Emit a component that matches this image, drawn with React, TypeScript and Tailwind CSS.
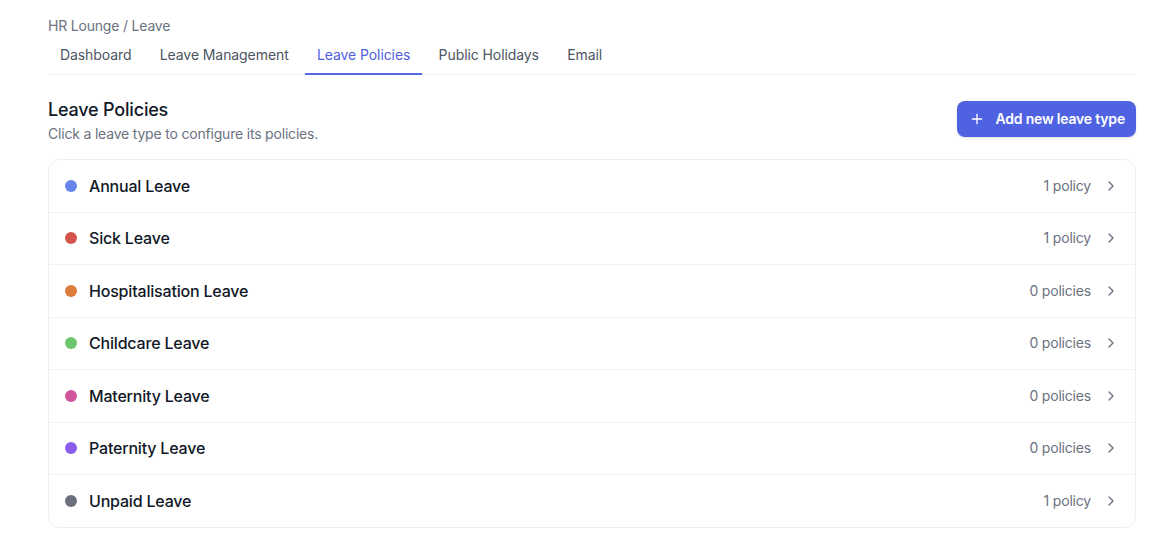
import React from "react";
import { ChevronRight, Plus } from "lucide-react";

const rows = [
  { name: "Annual Leave", color: "#6584ec", count: "1 policy" },
  { name: "Sick Leave", color: "#d2544c", count: "1 policy" },
  { name: "Hospitalisation Leave", color: "#dd7b3a", count: "0 policies" },
  { name: "Childcare Leave", color: "#6cc76e", count: "0 policies" },
  { name: "Maternity Leave", color: "#d1559b", count: "0 policies" },
  { name: "Paternity Leave", color: "#8a5cee", count: "0 policies" },
  { name: "Unpaid Leave", color: "#6b6f7b", count: "1 policy" },
];

const tabs = ["Dashboard", "Leave Management", "Leave Policies", "Public Holidays", "Email"];

export default function App() {
  return (
    <div className="min-h-screen bg-white tracking-[-0.012em]" style={{ fontFamily: "Inter, 'Noto Sans', sans-serif" }}>
      <div className="pl-[48px] pr-[33px] pt-[16px]">
        <div className="text-sm leading-5 text-[#6b7280]">HR Lounge / Leave</div>
        <div className="mt-[4px] flex gap-[4.3px] border-b border-[#eef0f4]">
          {tabs.map((t) => {
            const active = t === "Leave Policies";
            return (
              <div
                key={t}
                className={
                  active
                    ? "px-3 pt-[5px] pb-[8px] text-sm leading-5 tracking-[-0.006em] text-[#4f5fdc] border-b-2 border-[#5569e0] -mb-px"
                    : "px-3 pt-[5px] pb-[8px] text-sm leading-5 tracking-[-0.006em] text-[#4b5563] border-b-2 border-transparent -mb-px"
                }
              >
                {t}
              </div>
            );
          })}
        </div>
        <div className="mt-[21px] flex items-center justify-between">
          <div>
            <div className="text-lg leading-7 font-medium text-[#111827]">Leave Policies</div>
            <div className="text-sm leading-5 text-[#6b7280]">Click a leave type to configure its policies.</div>
          </div>
          <button className="mt-[-2px] flex h-9 items-center gap-[10px] rounded-lg bg-[#4f63e2] pl-[12px] pr-[11px] text-sm font-semibold text-white shadow-sm">
            <Plus size={16} strokeWidth={2} />
            <span>Add new leave type</span>
          </button>
        </div>
        <div className="mt-[15px] rounded-xl border border-[#eceef2] bg-white">
          {rows.map((r, i) => (
            <div
              key={r.name}
              className={
                i === 0
                  ? "flex h-[51.5px] items-center justify-between px-4"
                  : "flex h-[52.5px] items-center justify-between border-t border-[#f0f1f5] px-4"
              }
            >
              <div className="flex items-center gap-3">
                <span className="block h-3 w-3 rounded-full" style={{ backgroundColor: r.color }} />
                <span className="text-base font-medium text-[#111827]">{r.name}</span>
              </div>
              <div className="flex items-center gap-3">
                <span className="text-sm text-[#6b7280]">{r.count}</span>
                <ChevronRight size={16} className="text-[#6b7280]" />
              </div>
            </div>
          ))}
        </div>
      </div>
    </div>
  );
}
